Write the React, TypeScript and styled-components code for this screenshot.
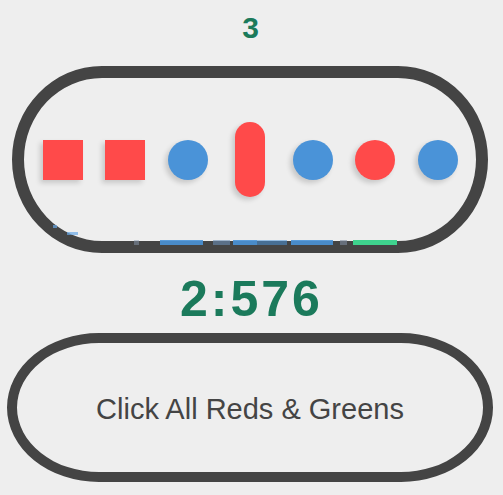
import styled, { createGlobalStyle } from "styled-components";

const GlobalStyle = createGlobalStyle`
    html, body {
        margin: 0;
        padding: 0;
        background: #eeeeee;
    }
    body {
        font-family: "Liberation Sans", Arial, sans-serif;
    }
`;

type Kind = "square" | "circle" | "bar";
type Tint = "red" | "blue";

const COLORS: Record<Tint, string> = {
    red: "#ff4a4a",
    blue: "#4a93d8",
};

const shapes: { kind: Kind; tint: Tint }[] = [
    { kind: "square", tint: "red" },
    { kind: "square", tint: "red" },
    { kind: "circle", tint: "blue" },
    { kind: "bar", tint: "red" },
    { kind: "circle", tint: "blue" },
    { kind: "circle", tint: "red" },
    { kind: "circle", tint: "blue" },
];

// leftovers of shapes sliding out the bottom of the arena
const trail = [
    { left: 110, width: 5, color: "#8a9ab0", opacity: 0.5 },
    { left: 136, width: 43, color: "#4a93d8", opacity: 0.9 },
    { left: 189, width: 17, color: "#6a8db5", opacity: 0.6 },
    { left: 209, width: 24, color: "#4a93d8", opacity: 0.9 },
    { left: 233, width: 30, color: "#4a93d8", opacity: 0.55 },
    { left: 267, width: 42, color: "#4a93d8", opacity: 0.9 },
    { left: 316, width: 7, color: "#7d8aa0", opacity: 0.6 },
    { left: 329, width: 44, color: "#3fd38e", opacity: 1 },
];

export default function App() {
    return (
        <>
            <GlobalStyle />
            <Page>
                <Level>3</Level>
                <Arena>
                    <ShapeRow>
                        {shapes.map((s, i) => (
                            <Cell key={i}>
                                <Shape $kind={s.kind} $tint={s.tint} />
                            </Cell>
                        ))}
                    </ShapeRow>
                    <CornerSpark $left={29} $top={147} $w={4} />
                    <CornerSpark $left={43} $top={154} $w={11} />
                    {trail.map((t, i) => (
                        <TrailPiece
                            key={i}
                            style={{ left: t.left, width: t.width, background: t.color, opacity: t.opacity }}
                        />
                    ))}
                </Arena>
                <Timer>2:576</Timer>
                <Prompt>Click All Reds &amp; Greens</Prompt>
            </Page>
        </>
    );
}

const Page = styled.div`
    width: 503px;
    height: 495px;
    display: flex;
    flex-direction: column;
    align-items: flex-start;
    overflow: hidden;
`;

const Level = styled.div`
    align-self: stretch;
    padding-top: 13px;
    text-align: center;
    font-size: 30px;
    line-height: 30px;
    font-weight: 700;
    color: #1b7a5b;
    padding-right: 2px;
`;

const Arena = styled.div`
    position: relative;
    box-sizing: border-box;
    margin: 23px 0 0 12px;
    width: 476px;
    height: 187px;
    border: 12px solid #444444;
    border-radius: 90px / 50%;
    display: flex;
    align-items: center;
    justify-content: center;
`;

const ShapeRow = styled.div`
    display: flex;
    align-items: center;
`;

const Cell = styled.div`
    width: 62.5px;
    display: flex;
    justify-content: center;
    align-items: center;
`;

const Shape = styled.div<{ $kind: Kind; $tint: Tint }>`
    background: ${(p) => COLORS[p.$tint]};
    width: ${(p) => (p.$kind === "bar" ? 30 : 40)}px;
    height: ${(p) => (p.$kind === "bar" ? 75 : 40)}px;
    border-radius: ${(p) => (p.$kind === "square" ? "0" : "20px")};
    box-shadow: -3px 3px 5px rgba(0, 0, 0, 0.16);
`;

const TrailPiece = styled.div`
    position: absolute;
    top: 162px;
    height: 5px;
`;

const CornerSpark = styled.div<{ $left: number; $top: number; $w: number }>`
    position: absolute;
    left: ${(p) => p.$left}px;
    top: ${(p) => p.$top}px;
    width: ${(p) => p.$w}px;
    height: 3px;
    background: #6aa8e6;
    opacity: 0.7;
`;

const Timer = styled.div`
    align-self: stretch;
    margin-top: 17px;
    text-align: center;
    font-size: 50px;
    line-height: 58px;
    font-weight: 700;
    letter-spacing: 3px;
    color: #1b7a5b;
`;

const Prompt = styled.div`
    box-sizing: border-box;
    margin: 5px 0 0 7px;
    width: 486px;
    height: 149px;
    padding-top: 3px;
    border: 10px solid #444444;
    border-radius: 92px / 50%;
    display: flex;
    align-items: center;
    justify-content: center;
    font-size: 29px;
    color: #444444;
`;
